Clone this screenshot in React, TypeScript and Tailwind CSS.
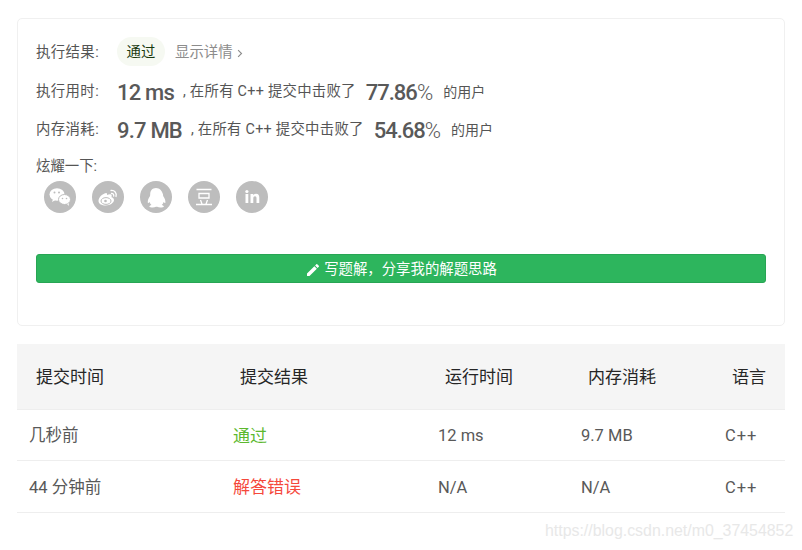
import React from "react";

const cols = "grid grid-cols-[204px_205px_143px_144px_72px] items-center";
const cjk = "font-['Roboto','Noto_Sans_CJK_SC',sans-serif]";

function WechatIcon() {
  return (
    <svg viewBox="0 0 32 32" className="w-8 h-8" fill="#fff">
      <ellipse cx="13" cy="13.500" rx="7.500" ry="6.200" />
      <path d="M9 18l-1 3 3.500-2z" />
      <ellipse cx="20.500" cy="18.500" rx="6" ry="5" stroke="#bdbdbd" strokeWidth="1" />
      <path d="M23 23l2 2-.5-3z" />
      <circle cx="10.500" cy="11.500" r="1" fill="#bdbdbd" />
      <circle cx="15" cy="11.500" r="1" fill="#bdbdbd" />
      <circle cx="18.500" cy="17.500" r=".8" fill="#bdbdbd" />
      <circle cx="22.500" cy="17.500" r=".8" fill="#bdbdbd" />
    </svg>
  );
}

function WeiboIcon() {
  return (
    <svg viewBox="0 0 32 32" className="w-8 h-8" fill="none">
      <path
        d="M14 12c-4 1-7.500 4.500-7.500 8 0 3 3.500 4.500 7 4.500 5 0 8.500-3 8.500-5.500 0-1.800-1.500-2.500-2.500-2.800.5-1.500.2-2.700-1-2.900-1-.2-2.500.3-3.500.8.300-1.500-.2-2.300-1-2.100z"
        fill="#fff"
      />
      <ellipse cx="14" cy="20" rx="5" ry="3.400" fill="none" stroke="#bdbdbd" strokeWidth="1" />
      <circle cx="13.500" cy="20" r="1.300" fill="#bdbdbd" />
      <path d="M19 9.500c3.500-.5 6 2.500 5 6M19.500 12.500c1.500-.2 2.600 1 2.200 2.600" stroke="#fff" strokeWidth="1.300" strokeLinecap="round" />
    </svg>
  );
}

function QqIcon() {
  return (
    <svg viewBox="0 0 32 32" className="w-8 h-8" fill="#fff">
      <path d="M16 7c-3.800 0-5.800 2.800-5.800 6.200 0 .8 0 1.300-.3 2-1.300 2-2.400 4.200-2.100 6.300.1.800.8.700 1.800-.6.300 1.200 1 2.200 1.900 3-1.300.4-2.200 1-2.200 1.600 0 .9 2 1 3.500 1 1.300 0 2.300-.3 3.200-.8.400 0 .9 0 1.200 0 .9.500 1.900.800 3.200.800 1.500 0 3.500-.1 3.500-1 0-.6-.9-1.200-2.200-1.600.9-.8 1.600-1.800 1.900-3 1 1.300 1.700 1.400 1.800.6.300-2.100-.8-4.300-2.100-6.300-.3-.7-.3-1.200-.3-2C21.800 9.800 19.800 7 16 7z" />
    </svg>
  );
}

function DoubanIcon() {
  return (
    <svg viewBox="0 0 32 32" className="w-8 h-8" fill="none" stroke="#fff" strokeWidth="1.300">
      <path d="M8.500 8.500h15M11 12.500h10v4.500H11zM12.500 19l1.500 4M19.500 19l-1.500 4M8 23.500h16" />
    </svg>
  );
}

function LinkedinIcon() {
  return (
    <svg viewBox="0 0 32 32" className="w-8 h-8" fill="#fff">
      <rect x="9.500" y="13" width="2.800" height="9" />
      <circle cx="10.900" cy="10.500" r="1.600" />
      <path d="M14.500 13h2.700v1.300c.6-1 1.600-1.500 2.800-1.500 2.400 0 3.300 1.500 3.300 4V22h-2.800v-4.700c0-1.300-.4-2.100-1.500-2.100s-1.700.8-1.700 2.100V22h-2.800z" />
    </svg>
  );
}

const shares = [WechatIcon, WeiboIcon, QqIcon, DoubanIcon, LinkedinIcon];

function StatRow({ label, value, pct }: { label: string; value: string; pct: string }) {
  return (
    <div className="flex items-center h-[38px] text-[14.4px] text-[#555]">
      <span className="w-[81px] tracking-[0.4px]">{label}</span>
      <span className="text-[22px] font-medium tracking-[-0.8px] text-[#595959]">{value}</span>
      <span className="ml-[9px] tracking-[0.25px]">, 在所有 C++ 提交中击败了</span>
      <span className="ml-[10px] text-[22px] font-medium tracking-[-1px] text-[#595959]">
        {pct.replace("%", "")}
        <span className="font-light">%</span>
      </span>
      <span className="ml-[11px] text-[14px]">的用户</span>
    </div>
  );
}

export default function App() {
  return (
    <div className={`w-[802px] h-[550px] bg-white relative overflow-hidden pt-[18px] pl-[17px] ${cjk}`}>
      {/* Result card */}
      <div className="w-[768px] h-[308px] rounded-[5px] border border-[#f0f0f0] px-[18px] pt-[15px]">
        <div className="flex items-center h-[38px] text-[14.4px] text-[#555]">
          <span className="w-[81px] tracking-[0.4px]">执行结果:</span>
          <span className="h-[29px] w-[48px] mb-[3px] rounded-full bg-[#f6f9f2] flex items-center justify-center pt-[3px] text-[#1a3a10]">
            通过
          </span>
          <span className="ml-[10px] text-[#8c8c8c]">显示详情</span>
          <svg viewBox="0 0 8 12" className="ml-[4px] w-[6px] h-[9px]" fill="none" stroke="#8c8c8c" strokeWidth="1.500">
            <path d="M1.500 1.500L6 6l-4.500 4.500" />
          </svg>
        </div>
        <div className="mt-px">
          <StatRow label="执行用时:" value="12 ms" pct="77.86%" />
          <StatRow label="内存消耗:" value="9.7 MB" pct="54.68%" />
        </div>

        <div className="mt-[8px] text-[14.4px] leading-[20px] text-[#555]">炫耀一下:</div>
        <div className="flex gap-4 mt-[4px] ml-[8px]">
          {shares.map((Icon, i) => (
            <div key={i} className="w-8 h-8 rounded-full bg-[#bdbdbd]">
              <Icon />
            </div>
          ))}
        </div>

        <button className="mt-[41px] w-[730px] h-[29px] rounded-[3px] bg-[#2db55d] border border-[#28a554] flex items-center justify-center pt-[2px] text-[14.4px] text-white">
          <svg viewBox="0 0 24 24" className="w-[16px] h-[16px] mr-[3px]" fill="#fff">
            <path d="M3 17.250V21h3.750L17.810 9.940l-3.750-3.750L3 17.250zM20.710 7.040a1 1 0 0 0 0-1.410l-2.340-2.340a1 1 0 0 0-1.410 0l-1.830 1.830 3.750 3.750 1.830-1.830z" />
          </svg>
          {"写题解\uFF0C分享我的解题思路"}
        </button>
      </div>

      {/* Submissions table */}
      <div className="mt-[18px] w-[768px]">
        <div className={`${cols} h-[66px] bg-[#f5f5f5] pl-[19px] pt-[2px] text-[17px] text-[#262626] border-b border-[#eee]`}>
          <span>提交时间</span>
          <span>提交结果</span>
          <span>运行时间</span>
          <span>内存消耗</span>
          <span>语言</span>
        </div>
        <div className={`${cols} h-[51px] pl-[12px] pt-[3px] text-[16.500px] text-[#595959] border-b border-[#eee]`}>
          <span>几秒前</span>
          <span className="text-[17px] text-[#5cb82e]">通过</span>
          <span>12 ms</span>
          <span>9.7 MB</span>
          <span className="tracking-[1px]">C++</span>
        </div>
        <div className={`${cols} h-[52px] pl-[12px] pt-[3px] text-[16.500px] text-[#595959] border-b border-[#eee]`}>
          <span>44 分钟前</span>
          <span className="text-[17px] text-[#f5483b]">解答错误</span>
          <span>N/A</span>
          <span>N/A</span>
          <span className="tracking-[1px]">C++</span>
        </div>
      </div>

      {/* Blog watermark */}
      <span className="absolute left-[545px] top-[521px] text-[15.900px] leading-5 text-[#e8e8e8] font-['Liberation_Sans',sans-serif]">
        https://blog.csdn.net/m0_37454852
      </span>
    </div>
  );
}
